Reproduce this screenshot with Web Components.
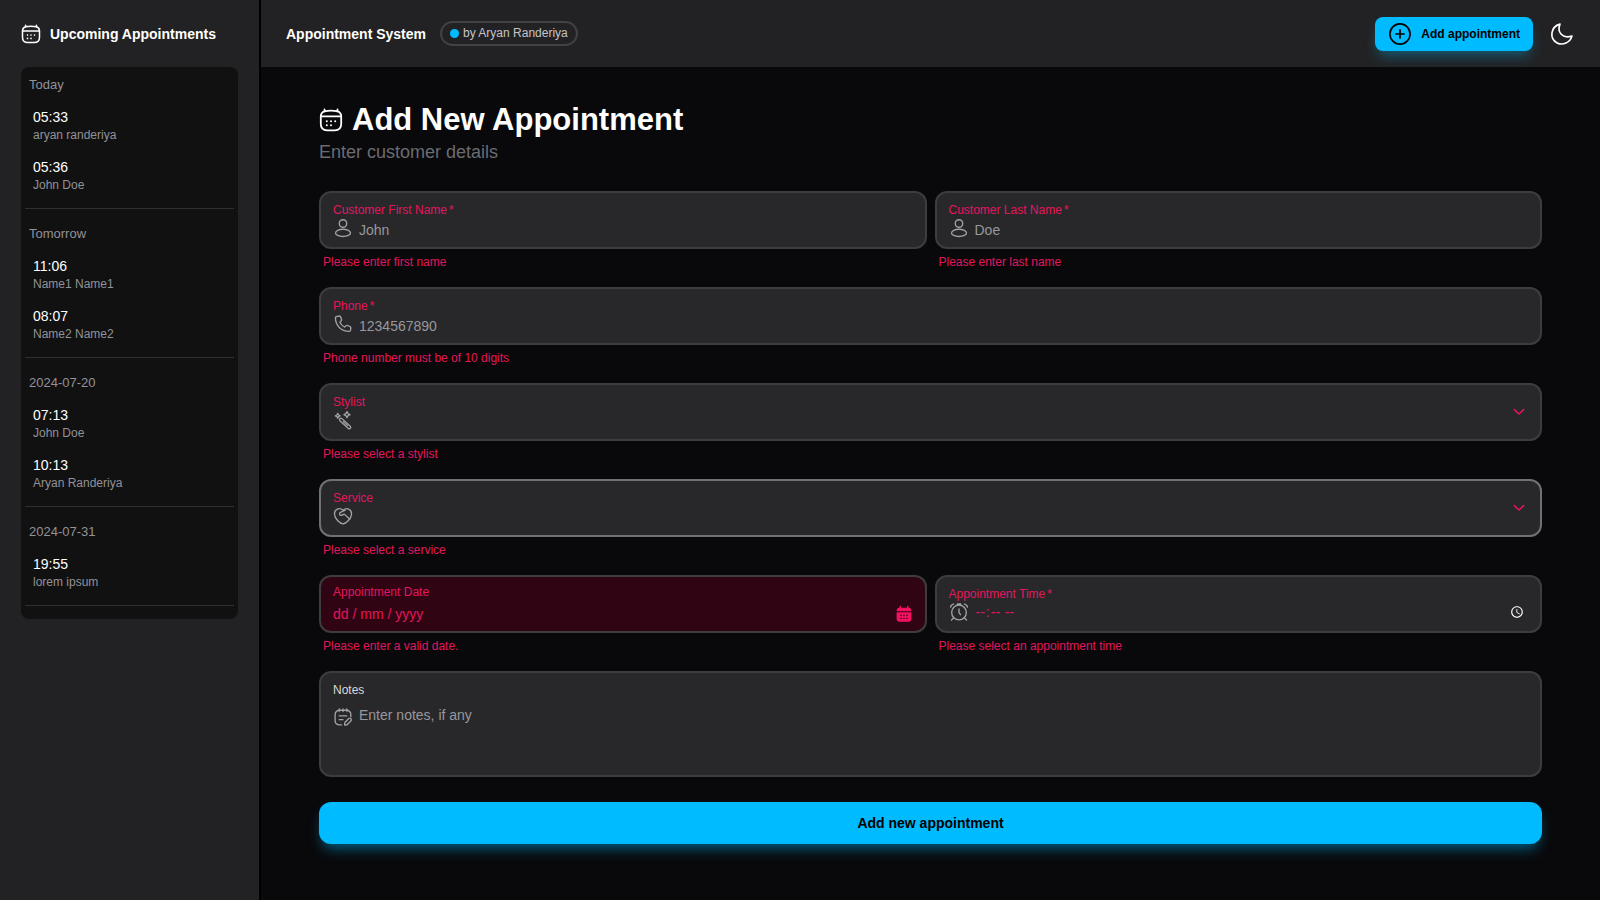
<!DOCTYPE html>
<html lang="en">
<head>
<meta charset="utf-8">
<meta name="viewport" content="width=device-width, initial-scale=1">
<title>Appointment System</title>
<style>
    :root {
        color-scheme: dark;
        --panel: #222224;
        --field: #28282a;
        --line: #3d3d40;
        --muted: #929297;
        --danger: #e3165d;
        --primary: #00bbff;
    }
    body {
        margin: 0;
        background: #09090b;
        color: #fff;
        font-family: "Liberation Sans", Arial, sans-serif;
        font-size: 14px;
        line-height: 20px;
    }
</style>
</head>
<body>
<appointment-app></appointment-app>

<script>
// Icons — one 24x24 outline set, coloured by currentColor
class AppIcon extends HTMLElement {
    static shapes = {
        calendar: `
            <path d="M5.500 3.300C3 4 1.800 5.500 1.800 8.500V16c0 4.500 2 6.300 6.400 6.300h7.600c4.400 0 6.400-1.800 6.400-6.300V8.500c0-3-1.200-4.500-3.700-5.200"/>
            <path d="M5.500 3.300C9 2.600 15 2.600 18.500 3.300M2 8.300h20M5.500 1.500v1.800M18.500 1.500v1.800"/>
            <path stroke-width="2" d="M7.800 13.300h.01M12 13.300h.01M16.200 13.300h.01M7.800 17.300h.01M12 17.300h.01"/>`,
        user: `
            <circle cx="12" cy="6" r="5"/>
            <ellipse cx="12" cy="18.500" rx="10" ry="4.800"/>`,
        phone: `
            <path d="M3.600 2l3-.6c1-.2 1.700.2 2.100 1.100l1.300 3.200c.4 1 .2 1.700-.6 2.400L7.800 9.700c1.300 2.800 3.500 5 6.400 6.400l1.600-1.600c.7-.7 1.500-.9 2.400-.5l3.200 1.400c.9.4 1.300 1.100 1.100 2.100l-.6 2.900c-.2 1-.9 1.500-1.900 1.500C9.700 21.900 1.900 14 1.900 3.800c0-1 .7-1.600 1.700-1.800z"/>`,
        wand: `
            <path d="M8.200 13.400c-1.300-1.300-1.100-2.500-.4-3.200.8-.8 2-.9 3.300.3l10.500 9.700c1 1 1 2.100.2 2.900-.8.800-2 .8-3-.2z"/>
            <path stroke-width="1.400" d="M12.300 14.200l5.700 5.300"/>
            <path d="M17.300.8l1.400 2.600 2.600 1.400-2.600 1.400-1.400 2.600-1.500-2.600-2.600-1.400 2.600-1.400z"/>
            <path d="M5 3.200L6.100 5.300l2.100 1.100-2.100 1.100L5 9.600 3.900 7.500 1.800 6.400l2.100-1.100z"/>`,
        heart: `
            <path d="M12 22.500C8.500 22 .8 16 .6 9.300.5 3 7.300 0 12 4.200 16.700 0 23.500 3 23.400 9.300 23.200 16 15.500 22 12 22.500z"/>
            <path d="M15 4.200L8.600 7.100c-2.200 1.300-.9 4.800 1.500 3.900l3.700-1.500 7.200 6.900"/>`,
        alarm: `
            <circle cx="12" cy="12.700" r="9.800"/>
            <path d="M12 8v4.800l2 2.800M.8 5.500C1 3.200 2.500 1.700 4.800 1.400M23.200 5.500c-.2-2.300-1.700-3.800-4-4.100M5 19.800l-3 3M19 19.800l3 3"/>
            <path stroke-width="2.500" d="M10 1.600h4"/>`,
        notes: `
            <path d="M10 22.500H8c-4.500 0-6.500-1.800-6.500-6.300V9.500C1.500 5 3.500 3 8 3h8c4.500 0 6.500 2 6.500 6.500v2M7 1.300v3.400M12 1.300v3.400M17 1.300v3.400M7 10.500h10M7 15.500h5"/>
            <path d="M14 22.700l.5-3.400 5.200-5.200c1.900-1.600 4.600 1 3 3l-5.300 5.200z"/>`,
        plus: `
            <circle cx="12" cy="12" r="11"/>
            <path d="M7.500 12h9M12 7.500v9"/>`,
        moon: `
            <path d="M9.800 1.200C-.5 4-2.200 17.200 6.700 21.700 12.800 24.800 21 21.300 22.800 14.300 12.500 17.500 6.300 10 9.800 1.200z"/>`,
        chevron: `<path stroke-width="2.600" d="M4 8l8 7.500L20 8"/>`,
        picker: `
            <path fill="currentColor" d="M3 7.500C3 5.500 4 4.500 6 4.500h12c2 0 3 1 3 3zM3 10.500h18v7.500c0 2.500-1 3.500-3.500 3.500h-11C4 21.500 3 20.500 3 18z"/>
            <path stroke-width="2" d="M7 2v3M17 2v3"/>
            <path stroke="#310413" stroke-width="2" d="M8 13.500h.01M12 13.500h.01M16 13.500h.01M8 17.500h.01M12 17.500h.01M16 17.500h.01"/>`,
    };

    connectedCallback() {
        this.attachShadow({ mode: 'open' }).innerHTML = `
            <style>
                :host { display: block; flex: none; width: 20px; height: 20px; }
                svg { display: block; width: 100%; height: 100%; overflow: visible; }
            </style>
            <svg viewBox="0 0 24 24" fill="none" stroke="currentColor" stroke-width="1.8"
                stroke-linecap="round" stroke-linejoin="round" aria-hidden="true">${AppIcon.shapes[this.getAttribute('name')]}</svg>
        `;
    }
}

// One day of the sidebar list
class AppointmentDay extends HTMLElement {
    set day(day) {
        this.attachShadow({ mode: 'open' }).innerHTML = `
            <style>
                :host { display: block; padding-top: 6px; margin-bottom: 11px; }
                :host(:last-child) { margin-bottom: 9px; }
                h3 { margin: 0 0 8px; padding: 0 4px; font-size: 13px; line-height: 16px; font-weight: 400; color: var(--muted); }
                ul { list-style: none; margin: 0; padding: 0 8px 7px; border-bottom: 1px solid #303032; }
                li { padding: 6px 0 8px; }
                time { display: block; font-size: 14px; line-height: 20px; }
                span { display: block; font-size: 12px; line-height: 16px; color: var(--muted); }
            </style>
            <h3>${day.title}</h3>
            <ul>${day.items.map(([time, name]) => `<li><time>${time}</time><span>${name}</span></li>`).join('')}</ul>
        `;
    }
}

class AppointmentSidebar extends HTMLElement {
    static days = [
        { title: 'Today', items: [['05:33', 'aryan randeriya'], ['05:36', 'John Doe']] },
        { title: 'Tomorrow', items: [['11:06', 'Name1 Name1'], ['08:07', 'Name2 Name2']] },
        { title: '2024-07-20', items: [['07:13', 'John Doe'], ['10:13', 'Aryan Randeriya']] },
        { title: '2024-07-31', items: [['19:55', 'lorem ipsum']] },
    ];

    connectedCallback() {
        const root = this.attachShadow({ mode: 'open' });
        root.innerHTML = `
            <style>
                :host { display: block; box-sizing: border-box; padding: 0 21px; background: var(--panel); border-right: 2px solid #000; }
                header { display: flex; align-items: center; gap: 9px; height: 67px; }
                h2 { margin: 0; font-size: 14px; line-height: 20px; white-space: nowrap; }
                .list { padding: 4px; border-radius: 8px; background: #111112; }
            </style>
            <header>
                <app-icon name="calendar"></app-icon>
                <h2>Upcoming Appointments</h2>
            </header>
            <div class="list"></div>
        `;
        const list = root.querySelector('.list');
        AppointmentSidebar.days.forEach(day => {
            const el = document.createElement('appointment-day');
            el.day = day;
            list.append(el);
        });
    }
}

class AppHeader extends HTMLElement {
    connectedCallback() {
        this.attachShadow({ mode: 'open' }).innerHTML = `
            <style>
                :host { display: flex; align-items: center; height: 67px; padding: 0 27px 0 25px; background: var(--panel); }
                h1 { margin: 0 14px 0 0; font-size: 14px; line-height: 20px; white-space: nowrap; }
                .chip { display: flex; align-items: center; gap: 4px; padding: 2px 8px 3px; border: 2px solid #424245; border-radius: 16px; font-size: 12px; line-height: 16px; color: #c4c4c8; white-space: nowrap; }
                .chip::before { content: ''; width: 9px; height: 9px; border-radius: 50%; background: var(--primary); }
                .add { display: flex; align-items: center; gap: 10px; height: 34px; margin-left: auto; padding: 0 13px 0 14px; border: 0; border-radius: 8px; background: var(--primary); color: #000; font: bold 12px/16px "Liberation Sans", Arial, sans-serif; white-space: nowrap; box-shadow: 0 8px 14px -4px rgba(0, 187, 255, 0.4); cursor: pointer; }
                .theme { margin-left: 18px; padding: 0; border: 0; background: none; color: #fff; cursor: pointer; }
                app-icon { width: 22px; height: 22px; }
            </style>
            <h1>Appointment System</h1>
            <span class="chip">by Aryan Randeriya</span>
            <button class="add" type="button"><app-icon name="plus"></app-icon>Add appointment</button>
            <button class="theme" type="button" aria-label="Toggle theme"><app-icon name="moon"></app-icon></button>
        `;
    }
}

// Labelled control with its icon and error line
class FormField extends HTMLElement {
    control(type) {
        const hint = this.getAttribute('placeholder') || '';
        if (type === 'select') return `<select id="control"><option value=""></option></select>`;
        if (type === 'textarea') return `<textarea id="control" rows="3" placeholder="${hint}"></textarea>`;
        if (type === 'date') return `<input id="control" type="text" inputmode="numeric" placeholder="${hint}">`;
        return `<input id="control" type="${type}" placeholder="${hint}">`;
    }

    connectedCallback() {
        const type = this.getAttribute('type') || 'text';
        const icon = this.getAttribute('icon');
        const error = this.getAttribute('error');

        this.attachShadow({ mode: 'open' }).innerHTML = `
            <style>
                :host { display: block; min-width: 0; min-height: 82px; }
                .box { display: flex; align-items: center; box-sizing: border-box; min-height: 58px; padding: 0 12px; border: 2px solid var(--line); border-radius: 12px; background: var(--field); }
                :host([active]) .box { border-color: #717174; }
                .body { flex: 1; min-width: 0; }
                label { display: block; width: max-content; font-size: 12px; line-height: 16px; color: var(--danger); }
                label span { margin-left: 2px; }
                .row { display: flex; align-items: center; height: 20px; gap: 7px; color: #a1a1a6; }
                .row app-icon { width: 18px; height: 18px; margin-left: 1px; }
                input, select, textarea { flex: 1; min-width: 0; height: 20px; margin: 0; padding: 0; border: 0; outline: 0; background: none; color: #fff; font: 14px/20px "Liberation Sans", Arial, sans-serif; appearance: none; resize: none; }
                .row app-icon + input { padding-top: 4px; }
                ::placeholder { color: #97979d; opacity: 1; }
                .row app-icon + [type="time"] { padding-top: 0; color: var(--danger); }
                .chevron { width: 14px; height: 14px; margin-right: 2px; color: var(--danger); }
                .error { margin: 0; padding: 5px 4px 3px; font-size: 12px; line-height: 16px; color: var(--danger); }

                :host([type="date"]) .box { background: #310413; }
                :host([type="date"]) label { margin-bottom: 4px; }
                :host([type="date"]) ::placeholder { color: var(--danger); }
                .pick { padding: 0; border: 0; background: none; color: #f31260; cursor: pointer; }

                :host([type="textarea"]) { min-height: 0; }
                :host([type="textarea"]) .box { padding-block: 9px; }
                :host([type="textarea"]) label { margin-bottom: 7px; color: #d8d8dc; }
                :host([type="textarea"]) .row { height: auto; align-items: flex-start; }
                :host([type="textarea"]) app-icon { margin-top: 3px; }
                textarea { height: 61px; }
            </style>
            <div class="box">
                <div class="body">
                    <label for="control">${this.getAttribute('label')}${this.hasAttribute('required') ? '<span>*</span>' : ''}</label>
                    <div class="row">
                        ${icon ? `<app-icon name="${icon}"></app-icon>` : ''}
                        ${this.control(type)}
                        ${type === 'date' ? '<button class="pick" type="button" aria-label="Pick a date"><app-icon name="picker"></app-icon></button>' : ''}
                    </div>
                </div>
                ${type === 'select' ? '<app-icon class="chevron" name="chevron"></app-icon>' : ''}
            </div>
            ${error ? `<p class="error">${error}</p>` : ''}
        `;
    }
}

class AppointmentForm extends HTMLElement {
    connectedCallback() {
        this.attachShadow({ mode: 'open' }).innerHTML = `
            <style>
                :host { display: block; padding: 35px 58px; }
                h2 { display: flex; align-items: center; gap: 9px; margin: 0 0 1px; font-size: 31px; line-height: 36px; }
                h2 app-icon { width: 24px; height: 24px; }
                .sub { margin: 0 0 26px; font-size: 18px; line-height: 26px; color: #6b6b72; }
                form { display: grid; grid-template-columns: 1fr 1fr; gap: 14px 8px; }
                .wide { grid-column: 1 / -1; }
                .submit { height: 42px; margin-top: 11px; border: 0; border-radius: 12px; background: var(--primary); color: #000; font: bold 14px/20px "Liberation Sans", Arial, sans-serif; box-shadow: 0 8px 14px -4px rgba(0, 187, 255, 0.5); cursor: pointer; }
            </style>
            <h2><app-icon name="calendar"></app-icon>Add New Appointment</h2>
            <p class="sub">Enter customer details</p>
            <form>
                <form-field label="Customer First Name" required icon="user" placeholder="John" error="Please enter first name"></form-field>
                <form-field label="Customer Last Name" required icon="user" placeholder="Doe" error="Please enter last name"></form-field>
                <form-field class="wide" type="tel" label="Phone" required icon="phone" placeholder="1234567890" error="Phone number must be of 10 digits"></form-field>
                <form-field class="wide" type="select" label="Stylist" icon="wand" error="Please select a stylist"></form-field>
                <form-field class="wide" type="select" label="Service" icon="heart" active error="Please select a service"></form-field>
                <form-field type="date" label="Appointment Date" placeholder="dd / mm / yyyy" error="Please enter a valid date."></form-field>
                <form-field type="time" label="Appointment Time" required icon="alarm" error="Please select an appointment time"></form-field>
                <form-field class="wide" type="textarea" label="Notes" icon="notes" placeholder="Enter notes, if any"></form-field>
                <button class="submit wide" type="button">Add new appointment</button>
            </form>
        `;
    }
}

class AppointmentApp extends HTMLElement {
    connectedCallback() {
        this.attachShadow({ mode: 'open' }).innerHTML = `
            <style>
                :host { display: grid; grid-template-columns: 261px minmax(0, 1fr); min-height: 100vh; }
            </style>
            <appointment-sidebar></appointment-sidebar>
            <main>
                <app-header></app-header>
                <appointment-form></appointment-form>
            </main>
        `;
    }
}

customElements.define('app-icon', AppIcon);
customElements.define('appointment-day', AppointmentDay);
customElements.define('appointment-sidebar', AppointmentSidebar);
customElements.define('app-header', AppHeader);
customElements.define('form-field', FormField);
customElements.define('appointment-form', AppointmentForm);
customElements.define('appointment-app', AppointmentApp);
</script>
</body>
</html>
